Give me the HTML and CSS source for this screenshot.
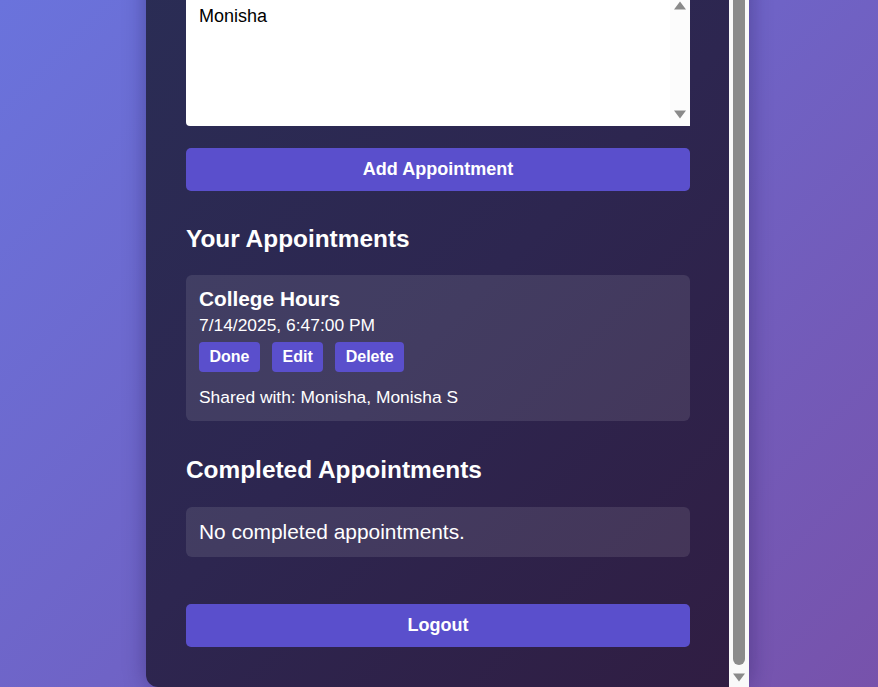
FILE: index.html
```html
<!DOCTYPE html>
<html lang="en">
<head>
<meta charset="utf-8">
<title>Appointments</title>
<link rel="stylesheet" href="styles.css">
</head>
<body>
  <main class="panel">
    <div class="panel-body">
      <div class="listbox">
        <div class="listbox-options">
          <div class="option">Monisha</div>
        </div>
        <div class="listbox-bar">
          <svg class="arrow" viewBox="0 0 12 9" width="12" height="9"><polygon points="6,0.5 12,8.5 0,8.5" fill="#8a8a8a"/></svg>
          <svg class="arrow" viewBox="0 0 12 9" width="12" height="9"><polygon points="0,0.5 12,0.5 6,8.5" fill="#8a8a8a"/></svg>
        </div>
      </div>

      <button class="btn btn-wide btn-add">Add Appointment</button>

      <h2 class="section-title first">Your Appointments</h2>
      <div class="appt">
        <div class="appt-title">College Hours</div>
        <div class="appt-date">7/14/2025, 6:47:00 PM</div>
        <div class="appt-actions">
          <button class="btn btn-small">Done</button>
          <button class="btn btn-small">Edit</button>
          <button class="btn btn-small">Delete</button>
        </div>
        <div class="appt-shared">Shared with: Monisha, Monisha S</div>
      </div>

      <h2 class="section-title second">Completed Appointments</h2>
      <div class="empty">No completed appointments.</div>

      <button class="btn btn-wide btn-logout">Logout</button>
    </div>
    <div class="scrollbar">
      <div class="thumb"></div>
      <div class="scroll-arrow">
        <svg viewBox="0 0 12 9" width="12" height="9"><polygon points="0,0.5 12,0.5 6,8.5" fill="#8a8a8a"/></svg>
      </div>
    </div>
  </main>
</body>
</html>
```
FILE: styles.css
```css
* { box-sizing: border-box; }

html, body {
  margin: 0;
  height: 100%;
}

body {
  height: 687px;
  overflow: hidden;
  display: flex;
  align-items: flex-end;
  padding-left: 146px;
  font-family: "Liberation Sans", Arial, sans-serif;
  background: linear-gradient(135deg, #6a73dc 0%, #6f63c6 50%, #7752ab 100%);
  color: #ffffff;
}

.panel {
  width: 603px;
  display: flex;
  background: linear-gradient(135deg, #2a2d55 0%, #2d2650 50%, #301d42 100%);
  border-radius: 12px;
  box-shadow: 0 0 22px rgba(20, 10, 60, 0.35);
}

.panel-body {
  flex: 1;
  padding: 40px 39px 40px 40px;
  display: flex;
  flex-direction: column;
}

/* list box */
.listbox {
  height: 132px;
  background: #ffffff;
  border-radius: 4px;
  display: flex;
}

.listbox-options {
  flex: 1;
  padding: 12px 13px;
}

.option {
  font-size: 18px;
  line-height: 21px;
  color: #000000;
}

.listbox-bar {
  width: 20px;
  background: #fcfcfc;
  display: flex;
  flex-direction: column;
  justify-content: space-between;
  align-items: center;
  padding: 7px 0;
}

.arrow { display: block; }

/* buttons */
.btn {
  font-family: inherit;
  border: none;
  color: #ffffff;
  background: #5a4fcc;
  font-weight: bold;
  cursor: pointer;
}

.btn-wide {
  width: 100%;
  font-size: 18px;
  line-height: 21px;
  padding: 11px 0;
  border-radius: 5px;
}

.btn-add { margin-top: 22px; }
.btn-logout { margin-top: 47px; }

.btn-small {
  font-size: 16px;
  line-height: 18px;
  padding: 6px 10.5px;
  border-radius: 4px;
}

/* headings */
.section-title {
  font-size: 24.4px;
  line-height: 28px;
  font-weight: bold;
  margin: 0;
}

.section-title.first { margin: 34px 0 22px; }
.section-title.second { margin: 35px 0 23px; }

/* appointment card */
.appt {
  background: rgba(255, 255, 255, 0.1);
  border-radius: 6px;
  padding: 12px 13px 14px;
}

.appt-title {
  font-size: 20.8px;
  line-height: 24px;
  font-weight: bold;
  margin-bottom: 4px;
}

.appt-date {
  font-size: 17.4px;
  line-height: 20px;
}

.appt-actions {
  display: flex;
  gap: 12px;
  margin-top: 7px;
}

.appt-shared {
  font-size: 17.4px;
  line-height: 20px;
  margin-top: 15px;
}

.empty {
  background: rgba(255, 255, 255, 0.1);
  border-radius: 6px;
  padding: 13px;
  font-size: 20.9px;
  line-height: 24px;
}

/* panel scrollbar */
.scrollbar {
  width: 20px;
  background: #f9f9f9;
  display: flex;
  flex-direction: column;
}

.thumb {
  flex: 1;
  margin: 0 4px;
  background: #8b8b8b;
  border-radius: 6px;
}

.scroll-arrow {
  height: 22px;
  padding-top: 8px;
  display: flex;
  justify-content: center;
}

.scroll-arrow svg { display: block; }
```
